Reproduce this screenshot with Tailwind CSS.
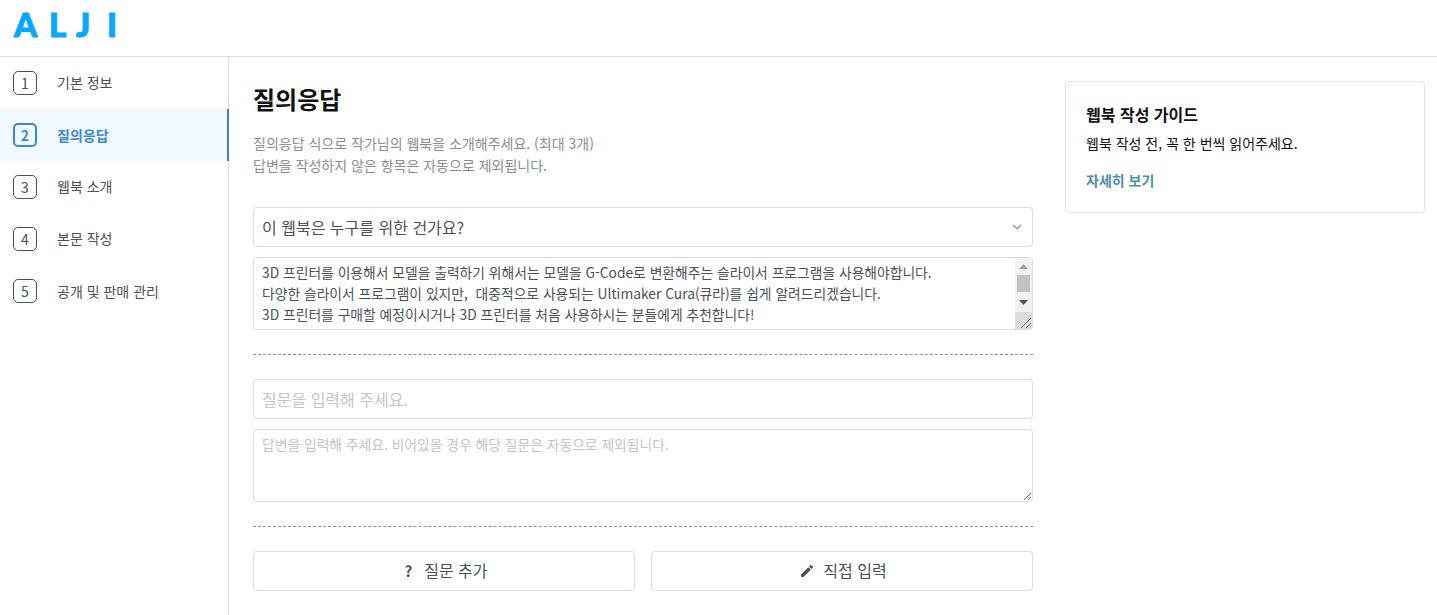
<!DOCTYPE html>
<html lang="ko">
<head>
    <meta charset="UTF-8">
    <title>질의응답</title>
    <script src="https://cdn.jsdelivr.net/npm/@tailwindcss/browser@4"></script>
</head>
<body class="bg-white h-[615px] overflow-hidden font-['Noto_Sans_CJK_KR','Noto_Sans',sans-serif] text-[#212529]">
    <!-- Header -->
    <header class="h-[57px] border-b border-[#dcdcdc] flex items-center pl-[14px] pb-[7px]">
        <div class="flex items-center text-[#06a8ff] text-[33px] font-['Lato',sans-serif] font-black leading-none [-webkit-text-stroke:1px_#06a8ff]">
            <span class="w-[35px]">A</span><span class="w-[27px]">L</span><span class="w-[31px]">J</span><span>I</span>
        </div>
    </header>

    <div class="flex h-[558px]">
        <!-- Sidebar -->
        <nav class="w-[229px] shrink-0 border-r border-[#dcdcdc] text-[14px] text-[#495057]">
            <a class="h-[52px] flex items-center pl-[13px] gap-[20px]"><span class="w-[24px] h-[24px] rounded-[5px] border border-[#495057] flex items-center justify-center text-[14px]">1</span><span class="mb-[2px]">기본 정보</span></a>
            <a class="h-[52px] flex items-center pl-[13px] gap-[20px] bg-[#f0f9ff] border-r-2 border-[#3d80d0] mr-[-1px] text-[#3d85d8] font-bold"><span class="w-[24px] h-[24px] rounded-[5px] border-2 border-[#3d85d8] flex items-center justify-center text-[14px]">2</span>질의응답</a>
            <a class="h-[52px] flex items-center pl-[13px] gap-[20px]"><span class="w-[24px] h-[24px] rounded-[5px] border border-[#495057] flex items-center justify-center text-[14px]">3</span><span class="mb-[2px]">웹북 소개</span></a>
            <a class="h-[52px] flex items-center pl-[13px] gap-[20px]"><span class="w-[24px] h-[24px] rounded-[5px] border border-[#495057] flex items-center justify-center text-[14px]">4</span><span class="mb-[2px]">본문 작성</span></a>
            <a class="h-[52px] flex items-center pl-[13px] gap-[20px]"><span class="w-[24px] h-[24px] rounded-[5px] border border-[#495057] flex items-center justify-center text-[14px]">5</span>공개 및 판매 관리</a>
        </nav>

        <!-- Main form -->
        <main class="w-[780px] ml-[24px] shrink-0">
            <h1 class="mt-[25px] text-[24px] leading-[34px] font-bold text-[#111]">질의응답</h1>
            <p class="mt-[16px] text-[14px] leading-[22px] text-[#868e96]">질의응답 식으로 작가님의 웹북을 소개해주세요. (최대 3개)<br>답변을 작성하지 않은 항목은 자동으로 제외됩니다.</p>

            <div class="mt-[31px] h-[40px] border border-[#dcdcdc] rounded-[4px] flex items-center justify-between pl-[8px] pr-[9px] text-[16px] text-[#495057]">
                <span>이 웹북은 누구를 위한 건가요?</span>
                <svg width="12" height="12" viewBox="0 0 12 12" fill="none" stroke="#868e96" stroke-width="1.2"><path d="M2 4l4 4 4-4"/></svg>
            </div>
            <!-- textarea with its scrollbar drawn on top -->
            <div class="relative mt-[10px]">
                <textarea class="block w-full h-[73px] border border-[#dcdcdc] rounded-[4px] px-[8px] py-[4px] text-[13.8px] leading-[21px] text-[#495057] resize-none overflow-hidden">3D 프린터를 이용해서 모델을 출력하기 위해서는 모델을 G-Code로 변환해주는 슬라이서 프로그램을 사용해야합니다.
다양한 슬라이서 프로그램이 있지만,  대중적으로 사용되는 Ultimaker Cura(큐라)를 쉽게 알려드리겠습니다.
3D 프린터를 구매할 예정이시거나 3D 프린터를 처음 사용하시는 분들에게 추천합니다!
</textarea>
                <div class="absolute right-[1px] top-[1px] bottom-[1px] w-[17px] bg-[#f1f1f1] flex flex-col items-center rounded-tr-[3px] overflow-hidden">
                    <svg class="mt-[6px]" width="9" height="5" viewBox="0 0 9 5"><path d="M4.5 0L9 5H0z" fill="#a3a3a3"/></svg>
                    <div class="mt-[6px] w-[13px] h-[17px] bg-[#c1c1c1]"></div>
                    <svg class="mt-[8px]" width="9" height="5" viewBox="0 0 9 5"><path d="M4.5 5L9 0H0z" fill="#505050"/></svg>
                    <div class="mt-auto w-[17px] h-[17px] bg-[#dcdcdc] flex items-center justify-center">
                        <svg width="17" height="17" viewBox="0 0 17 17" fill="none" stroke="#6b6b6b"><path d="M6 16L16 6M11 16l5-5"/></svg>
                    </div>
                </div>
            </div>
            <div class="mt-[24px] border-t border-dashed border-[#868e96]"></div>

            <input class="mt-[24px] block w-full h-[40px] border border-[#dcdcdc] rounded-[4px] px-[8px] text-[16px] placeholder:text-[#c4c4c4]" placeholder="질문을 입력해 주세요.">
            <textarea class="mt-[10px] block w-full h-[73px] border border-[#dcdcdc] rounded-[4px] px-[8px] py-[4px] text-[13.8px] leading-[21px] placeholder:text-[#c4c4c4]" placeholder="답변을 입력해 주세요. 비어있을 경우 해당 질문은 자동으로 제외됩니다."></textarea>
            <div class="mt-[24px] border-t border-dashed border-[#868e96]"></div>

            <div class="mt-[24px] grid grid-cols-2 gap-[16px]">
                <button class="h-[40px] border border-[#dcdcdc] rounded-[4px] flex items-center justify-center gap-[12px] pl-[4px] text-[16px] text-[#495057]"><span class="font-bold text-[15px]">?</span><span class="mb-[2px]">질문 추가</span></button>
                <button class="h-[40px] border border-[#dcdcdc] rounded-[4px] flex items-center justify-center gap-[8px] pl-[2px] text-[16px] text-[#495057]">
                    <svg width="16" height="16" viewBox="0 0 24 24" fill="#495057"><path d="M3 17.25V21h3.75L17.81 9.94l-3.75-3.75L3 17.25zM20.71 7.04a1 1 0 0 0 0-1.41l-2.34-2.34a1 1 0 0 0-1.41 0l-1.83 1.83 3.75 3.75 1.83-1.83z"/></svg>
                    <span class="mb-[2px]">직접 입력</span></button>
            </div>
        </main>

        <!-- Guide card -->
        <aside class="ml-[32px] mt-[24px] w-[360px] h-[132px] border border-[#e5e5e5] rounded-[4px] px-[20px] pt-[19px]">
            <h2 class="text-[16px] leading-[26px] font-bold text-[#111]">웹북 작성 가이드</h2>
            <p class="mt-[5px] text-[14px] leading-[22px] text-[#111]">웹북 작성 전, 꼭 한 번씩 읽어주세요.</p>
            <a class="mt-[15px] block text-[14px] leading-[22px] font-bold text-[#4a90a8]">자세히 보기</a>
        </aside>
    </div>
</body>
</html>
